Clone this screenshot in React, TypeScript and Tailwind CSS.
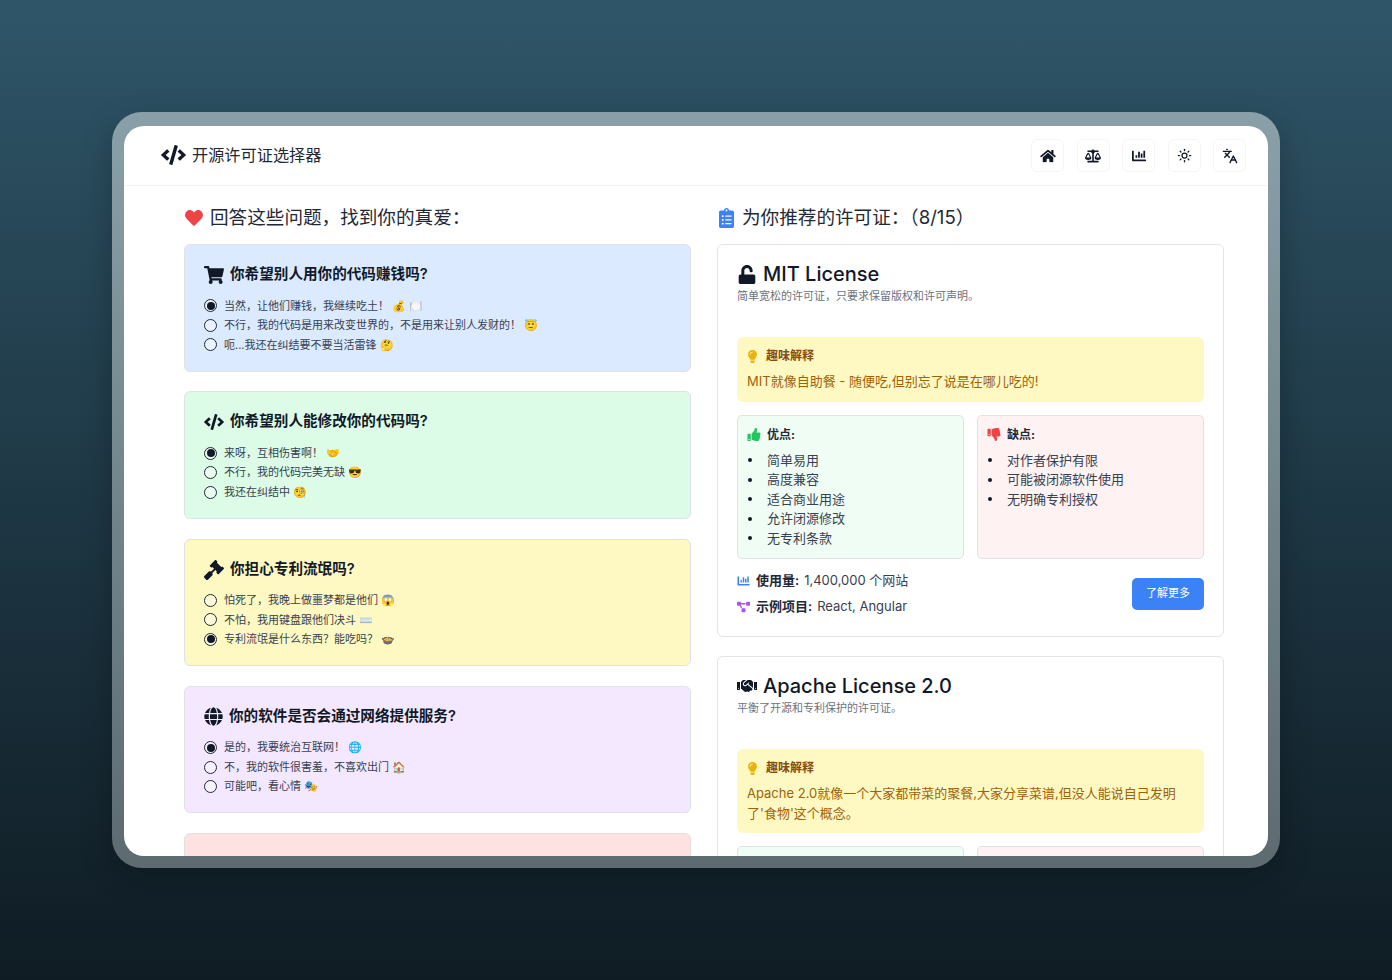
import type { ReactNode } from "react";
import {
  FaBalanceScale,
  FaChartBar,
  FaClipboardList,
  FaCode,
  FaGavel,
  FaGlobe,
  FaHandshake,
  FaHeart,
  FaHome,
  FaLightbulb,
  FaProjectDiagram,
  FaShoppingCart,
  FaThumbsDown,
  FaThumbsUp,
  FaUnlock,
} from "react-icons/fa";
import { Languages, Sun } from "lucide-react";

type Question = {
  title: string;
  icon: ReactNode;
  tone: string;
  selected: number;
  options: string[];
};

const questions: Question[] = [
  {
    title: "你希望别人用你的代码赚钱吗?",
    icon: <FaShoppingCart className="h-[18px] w-[20px]" />,
    tone: "bg-[#dbeafe]",
    selected: 0,
    options: ["当然，让他们赚钱，我继续吃土！ 💰 🍽️", "不行，我的代码是用来改变世界的，不是用来让别人发财的！ 😇", "呃...我还在纠结要不要当活雷锋 🤔"],
  },
  {
    title: "你希望别人能修改你的代码吗?",
    icon: <FaCode className="h-[18px] w-[20px]" />,
    tone: "bg-[#dcfce7]",
    selected: 0,
    options: ["来呀，互相伤害啊！ 🤝", "不行，我的代码完美无缺 😎", "我还在纠结中 🧐"],
  },
  {
    title: "你担心专利流氓吗?",
    icon: <FaGavel className="h-[20px] w-[20px]" />,
    tone: "bg-[#fef9c3]",
    selected: 2,
    options: ["怕死了，我晚上做噩梦都是他们 😱", "不怕，我用键盘跟他们决斗 ⌨️", "专利流氓是什么东西？能吃吗？ 🍲"],
  },
  {
    title: "你的软件是否会通过网络提供服务?",
    icon: <FaGlobe className="h-[19px] w-[19px]" />,
    tone: "bg-[#f3e8ff]",
    selected: 0,
    options: ["是的，我要统治互联网！ 🌐", "不，我的软件很害羞，不喜欢出门 🏠", "可能吧，看心情 🎭"],
  },
];

function QuestionCard({ q }: { q: Question }) {
  return (
    <div className={`mb-[19.7px] h-[127.6px] rounded-[6px] border border-[#dfe3e8] px-[19px] pt-[18px] ${q.tone}`}>
      <div className="flex h-6 items-center gap-[6px] text-[14.6px] font-semibold text-[#111827]">
        {q.icon}
        <span>{q.title}</span>
      </div>
      <div className="mt-[9px]">
        {q.options.map((o, i) => (
          <div key={o} className="flex h-[19.5px] items-center gap-[7px] text-[11px] text-[#374151]">
            <span className="flex h-[13px] w-[13px] shrink-0 items-center justify-center rounded-full border border-[#1f2937] bg-white/40">
              {i === q.selected ? <span className="h-[8px] w-[8px] rounded-full bg-[#111827]" /> : null}
            </span>
            <span className="whitespace-nowrap">{o}</span>
          </div>
        ))}
      </div>
    </div>
  );
}

function ProsCons({ title, items, icon, tone }: { title: string; items: string[]; icon: ReactNode; tone: string }) {
  return (
    <div className={`h-[144px] rounded-[5px] border border-[#dfe3e6] px-[9px] pt-[9px] ${tone}`}>
      <div className="flex h-5 items-center gap-[6px] text-[12px] font-bold text-[#1f2937]">
        {icon}
        <span>{title}</span>
      </div>
      <ul className="mt-[6px]">
        {items.map((t) => (
          <li key={t} className="flex h-[19.5px] items-center text-[13px] text-[#374151]">
            <span className="ml-[1px] mr-[15px] h-[4px] w-[4px] rounded-full bg-[#111827]" />
            {t}
          </li>
        ))}
      </ul>
    </div>
  );
}

function FunNote({ text }: { text: string }) {
  return (
    <div className="rounded-[6px] bg-[#fef9c3] px-[10px] pb-[10px] pt-[9px]">
      <div className="flex h-5 items-center gap-[8px] text-[12px] font-bold text-[#854d0e]">
        <FaLightbulb className="h-[13px] w-[11px] text-[#eab308]" />
        <span>趣味解释</span>
      </div>
      <p className="mt-[6px] text-[13px] leading-[19.5px] text-[#a16207]">{text}</p>
    </div>
  );
}

function IconButton({ children }: { children: ReactNode }) {
  return (
    <button type="button" className="flex h-[33px] w-[33px] items-center justify-center rounded-[6px] border border-[#f3f4f6] bg-white text-[#111827]">
      {children}
    </button>
  );
}

function LicenseCard({ children, icon, name, desc }: { children: ReactNode; icon: ReactNode; name: string; desc: string }) {
  return (
    <div className="mb-[19.7px] rounded-[6px] border border-[#e1e4e8] bg-white px-[19px] pb-[19px] pt-[15px]">
      <div className="flex h-7 items-center gap-[6px] text-[20px] font-medium text-[#111827]">
        {icon}
        <span>{name}</span>
      </div>
      <p className="mb-[33px] h-4 text-[11px] leading-4 text-[#6b7280]">{desc}</p>
      {children}
    </div>
  );
}

export default function App() {
  return (
    <div
      className="h-[980px] w-full overflow-hidden bg-gradient-to-b from-[#2f5669] to-[#0f1c24] pl-[112px] pr-[112px] pt-[112px]"
      style={{ fontFamily: 'Inter, "Noto Sans CJK SC", sans-serif' }}
    >
      <div className="rounded-[30px] bg-gradient-to-b from-[#8aa0a9] to-[#5d6b71] px-[12px] pb-[12px] pt-[14px] shadow-[0_10px_30px_rgba(0,0,0,0.25)]">
        <div className="h-[730px] overflow-hidden rounded-[20px] bg-white">
          {/* Nav */}
          <header className="flex h-[60px] items-center justify-between border-b border-[#f1f3f5] pl-[37px] pr-[22px]">
            <div className="flex items-center gap-[6px] text-[16.2px] text-[#1f2937]">
              <FaCode className="h-[20px] w-[25px] text-[#111827]" />
              <span>开源许可证选择器</span>
            </div>
            <div className="flex items-center gap-[12.5px]">
              <IconButton><FaHome className="h-[14px] w-[16px]" /></IconButton>
              <IconButton><FaBalanceScale className="h-[14px] w-[16px]" /></IconButton>
              <IconButton><FaChartBar className="h-[14px] w-[16px]" /></IconButton>
              <IconButton><Sun className="h-[15px] w-[15px]" strokeWidth={2} /></IconButton>
              <IconButton><Languages className="h-[16px] w-[16px]" strokeWidth={2} /></IconButton>
            </div>
          </header>

          <div className="grid grid-cols-2 gap-[26px] pl-[60px] pr-[44px]">
            {/* Questions */}
            <section>
              <h2 className="mb-[13px] mt-[19px] flex h-[26px] items-center gap-[6px] text-[18.6px] font-normal text-[#1f2937]">
                <FaHeart className="h-[18px] w-[20px] text-[#ef4444]" />
                <span>回答这些问题，找到你的真爱：</span>
              </h2>
              {questions.map((q) => <QuestionCard key={q.title} q={q} />)}
              <div className="h-[60px] rounded-[6px] border border-[#e5e0df] bg-[#fee2e2]" />
            </section>

            {/* Licenses */}
            <section>
              <h2 className="mb-[13px] mt-[19px] flex h-[26px] items-center gap-[8px] pl-[2px] text-[18.6px] font-normal text-[#1f2937]">
                <FaClipboardList className="h-[20px] w-[15px] text-[#3b82f6]" />
                <span>为你推荐的许可证：（8/15）</span>
              </h2>

              <LicenseCard icon={<FaUnlock className="h-[19px] w-[20px]" />} name="MIT License" desc="简单宽松的许可证，只要求保留版权和许可声明。">
                <FunNote text="MIT就像自助餐 - 随便吃,但别忘了说是在哪儿吃的!" />
                <div className="mt-[13px] grid grid-cols-2 gap-[13px]">
                  <ProsCons
                    title="优点:"
                    tone="bg-[#f0fdf4]"
                    icon={<FaThumbsUp className="h-[13px] w-[14px] text-[#22c55e]" />}
                    items={["简单易用", "高度兼容", "适合商业用途", "允许闭源修改", "无专利条款"]}
                  />
                  <ProsCons
                    title="缺点:"
                    tone="bg-[#fef2f2]"
                    icon={<FaThumbsDown className="h-[13px] w-[14px] text-[#ef4444]" />}
                    items={["对作者保护有限", "可能被闭源软件使用", "无明确专利授权"]}
                  />
                </div>
                <div className="mt-[12px] flex items-center justify-between">
                  <div className="flex flex-col gap-[6px] text-[13px] text-[#374151]">
                    <div className="flex h-5 items-center">
                      <FaChartBar className="mr-[6px] h-[12px] w-[13px] text-[#3b82f6]" />
                      <b className="mr-[5px] font-semibold text-[#1f2937]">使用量:</b>1,400,000 个网站
                    </div>
                    <div className="flex h-5 items-center">
                      <FaProjectDiagram className="mr-[6px] h-[12px] w-[13px] text-[#a855f7]" />
                      <b className="mr-[5px] font-semibold text-[#1f2937]">示例项目:</b>React, Angular
                    </div>
                  </div>
                  <button type="button" className="h-[32px] w-[72px] rounded-[5px] bg-[#3b82f6] text-[11px] text-white">了解更多</button>
                </div>
              </LicenseCard>

              <LicenseCard icon={<FaHandshake className="h-[16px] w-[20px]" />} name="Apache License 2.0" desc="平衡了开源和专利保护的许可证。">
                <FunNote text="Apache 2.0就像一个大家都带菜的聚餐,大家分享菜谱,但没人能说自己发明了'食物'这个概念。" />
                <div className="mt-[13px] grid grid-cols-2 gap-[13px]">
                  <div className="h-[60px] rounded-[5px] border border-[#dfe3e6] bg-[#f0fdf4]" />
                  <div className="h-[60px] rounded-[5px] border border-[#dfe3e6] bg-[#fef2f2]" />
                </div>
              </LicenseCard>
            </section>
          </div>
        </div>
      </div>
    </div>
  );
}
